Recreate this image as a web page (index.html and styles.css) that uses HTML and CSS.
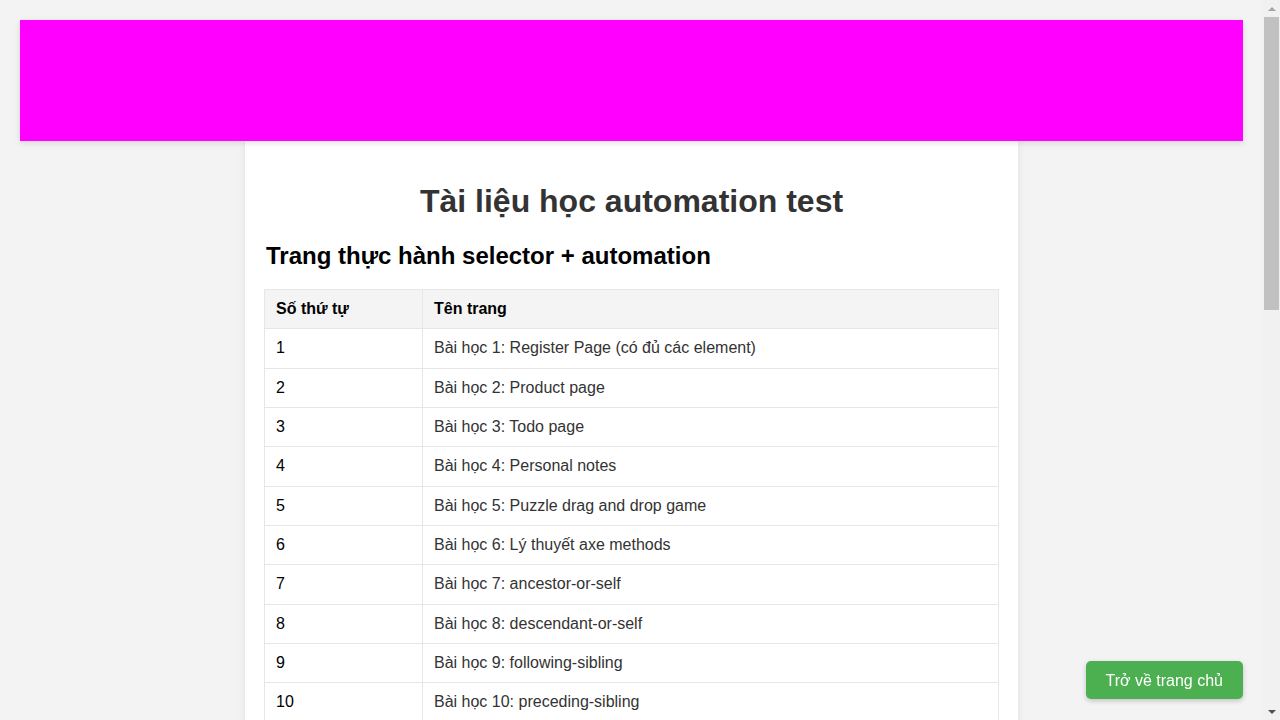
FILE: index.html
```html
<!DOCTYPE html>
<html lang="vi">
<head>
<meta charset="utf-8">
<title>Tài liệu học automation test</title>
<link rel="stylesheet" href="styles.css">
</head>
<body>
<div class="page">
  <header class="banner"></header>
  <main class="container">
    <h1 class="title">Tài liệu học automation test</h1>
    <h2 class="subtitle">Trang thực hành selector + automation</h2>
    <table class="lessons">
      <thead>
        <tr><th class="col-no">Số thứ tự</th><th>Tên trang</th></tr>
      </thead>
      <tbody>
        <tr><td>1</td><td><a class="link">Bài học 1: Register Page (có đủ các element)</a></td></tr>
        <tr><td>2</td><td><a class="link">Bài học 2: Product page</a></td></tr>
        <tr><td>3</td><td><a class="link">Bài học 3: Todo page</a></td></tr>
        <tr><td>4</td><td><a class="link">Bài học 4: Personal notes</a></td></tr>
        <tr><td>5</td><td><a class="link">Bài học 5: Puzzle drag and drop game</a></td></tr>
        <tr><td>6</td><td><a class="link">Bài học 6: Lý thuyết axe methods</a></td></tr>
        <tr><td>7</td><td><a class="link">Bài học 7: ancestor-or-self</a></td></tr>
        <tr><td>8</td><td><a class="link">Bài học 8: descendant-or-self</a></td></tr>
        <tr><td>9</td><td><a class="link">Bài học 9: following-sibling</a></td></tr>
        <tr><td>10</td><td><a class="link">Bài học 10: preceding-sibling</a></td></tr>
        <tr><td>11</td><td><a class="link">Bài học 11: following</a></td></tr>
        <tr><td>12</td><td><a class="link">Bài học 12: preceding</a></td></tr>
        <tr><td>13</td><td><a class="link">Bài học 13: ancestor</a></td></tr>
        <tr><td>14</td><td><a class="link">Bài học 14: descendant</a></td></tr>
        <tr><td>15</td><td><a class="link">Bài học 15: parent</a></td></tr>
        <tr><td>16</td><td><a class="link">Bài học 16: child</a></td></tr>
        <tr><td>17</td><td><a class="link">Bài học 17: Iframe</a></td></tr>
        <tr><td>18</td><td><a class="link">Bài học 18: Alert, confirm, prompt</a></td></tr>
        <tr><td>19</td><td><a class="link">Bài học 19: Upload file</a></td></tr>
        <tr><td>20</td><td><a class="link">Bài học 20: Download file</a></td></tr>
        <tr><td>21</td><td><a class="link">Bài học 21: Multiple tabs</a></td></tr>
        <tr><td>22</td><td><a class="link">Bài học 22: Shadow DOM</a></td></tr>
        <tr><td>23</td><td><a class="link">Bài học 23: Hover menu</a></td></tr>
        <tr><td>24</td><td><a class="link">Bài học 24: Date picker</a></td></tr>
        <tr><td>25</td><td><a class="link">Bài học 25: Dynamic table</a></td></tr>
        <tr><td>26</td><td><a class="link">Bài học 26: Infinite scroll</a></td></tr>
        <tr><td>27</td><td><a class="link">Bài học 27: Login form</a></td></tr>
        <tr><td>28</td><td><a class="link">Bài học 28: Checkout page</a></td></tr>
        <tr><td>29</td><td><a class="link">Bài học 29: Pagination</a></td></tr>
        <tr><td>30</td><td><a class="link">Bài học 30: Slider</a></td></tr>
        <tr><td>31</td><td><a class="link">Bài học 31: Modal dialog</a></td></tr>
        <tr><td>32</td><td><a class="link">Bài học 32: Tooltip</a></td></tr>
        <tr><td>33</td><td><a class="link">Bài học 33: Keyboard &amp; mouse actions</a></td></tr>
      </tbody>
    </table>
  </main>
  <a class="home-btn">Trở về trang chủ</a>
</div>
<div class="scrollbar" aria-hidden="true">
  <span class="sb-arrow sb-up"></span>
  <span class="sb-thumb"></span>
  <span class="sb-arrow sb-down"></span>
</div>
</body>
</html>
```
FILE: styles.css
```css
html, body {
  margin: 0;
  padding: 0;
  scrollbar-width: none;
}
body {
  background: #f3f3f3;
  font-family: "Liberation Sans", Arial, sans-serif;
  color: #333;
}
.page {
  margin-right: 17px;
  padding-bottom: 20px;
}
.banner {
  position: fixed;
  top: 20px;
  left: 20px;
  right: 37px;
  height: 121px;
  background: #ff00ff;
  box-shadow: 0 2px 6px rgba(0, 0, 0, 0.12);
  z-index: 10;
}
.container {
  width: 735px;
  margin: 141px auto 0;
  padding: 20px 19px;
  background: #fff;
  box-shadow: 0 0 8px rgba(0, 0, 0, 0.08);
}
.title {
  text-align: center;
  font-size: 32px;
  font-weight: bold;
  color: #333;
  margin: 22px 0 21px;
  line-height: 37px;
}
.subtitle {
  font-size: 24px;
  font-weight: bold;
  color: #000;
  margin: 22px 0 19px 2px;
  line-height: 28px;
}
.lessons {
  width: 100%;
  border-collapse: collapse;
  font-size: 16px;
}
.lessons th,
.lessons td {
  border: 1px solid #e6e6e6;
  padding: 10px 11px;
  text-align: left;
  line-height: 18.33px;
}
.lessons th {
  background: #f4f4f4;
  color: #000;
  font-weight: bold;
}
.lessons td {
  color: #000;
}
.col-no {
  width: 135px;
}
.link {
  color: #333;
  text-decoration: none;
}
.home-btn {
  position: fixed;
  right: 37px;
  bottom: 21px;
  background: #4caf50;
  color: #fff;
  font-size: 16px;
  line-height: 18px;
  padding: 11px 20px 9px;
  border-radius: 5px;
  box-shadow: 0 2px 5px rgba(0, 0, 0, 0.2);
  text-decoration: none;
  z-index: 10;
}
.scrollbar {
  position: fixed;
  top: 0;
  right: 0;
  width: 17px;
  height: 100vh;
  background: #f1f1f1;
  display: flex;
  flex-direction: column;
  align-items: center;
  z-index: 20;
}
.sb-arrow {
  height: 17px;
  width: 17px;
  display: flex;
  align-items: center;
  justify-content: center;
  flex: none;
}
.sb-up::before,
.sb-down::before {
  content: "";
  width: 0;
  height: 0;
  border-left: 4px solid transparent;
  border-right: 4px solid transparent;
}
.sb-up::before {
  border-bottom: 4px solid #a3a3a3;
}
.sb-down::before {
  border-top: 4px solid #505050;
}
.sb-thumb {
  width: 15px;
  height: 293px;
  background: #c1c1c1;
  flex: none;
}
.sb-down {
  margin-top: auto;
}
```
